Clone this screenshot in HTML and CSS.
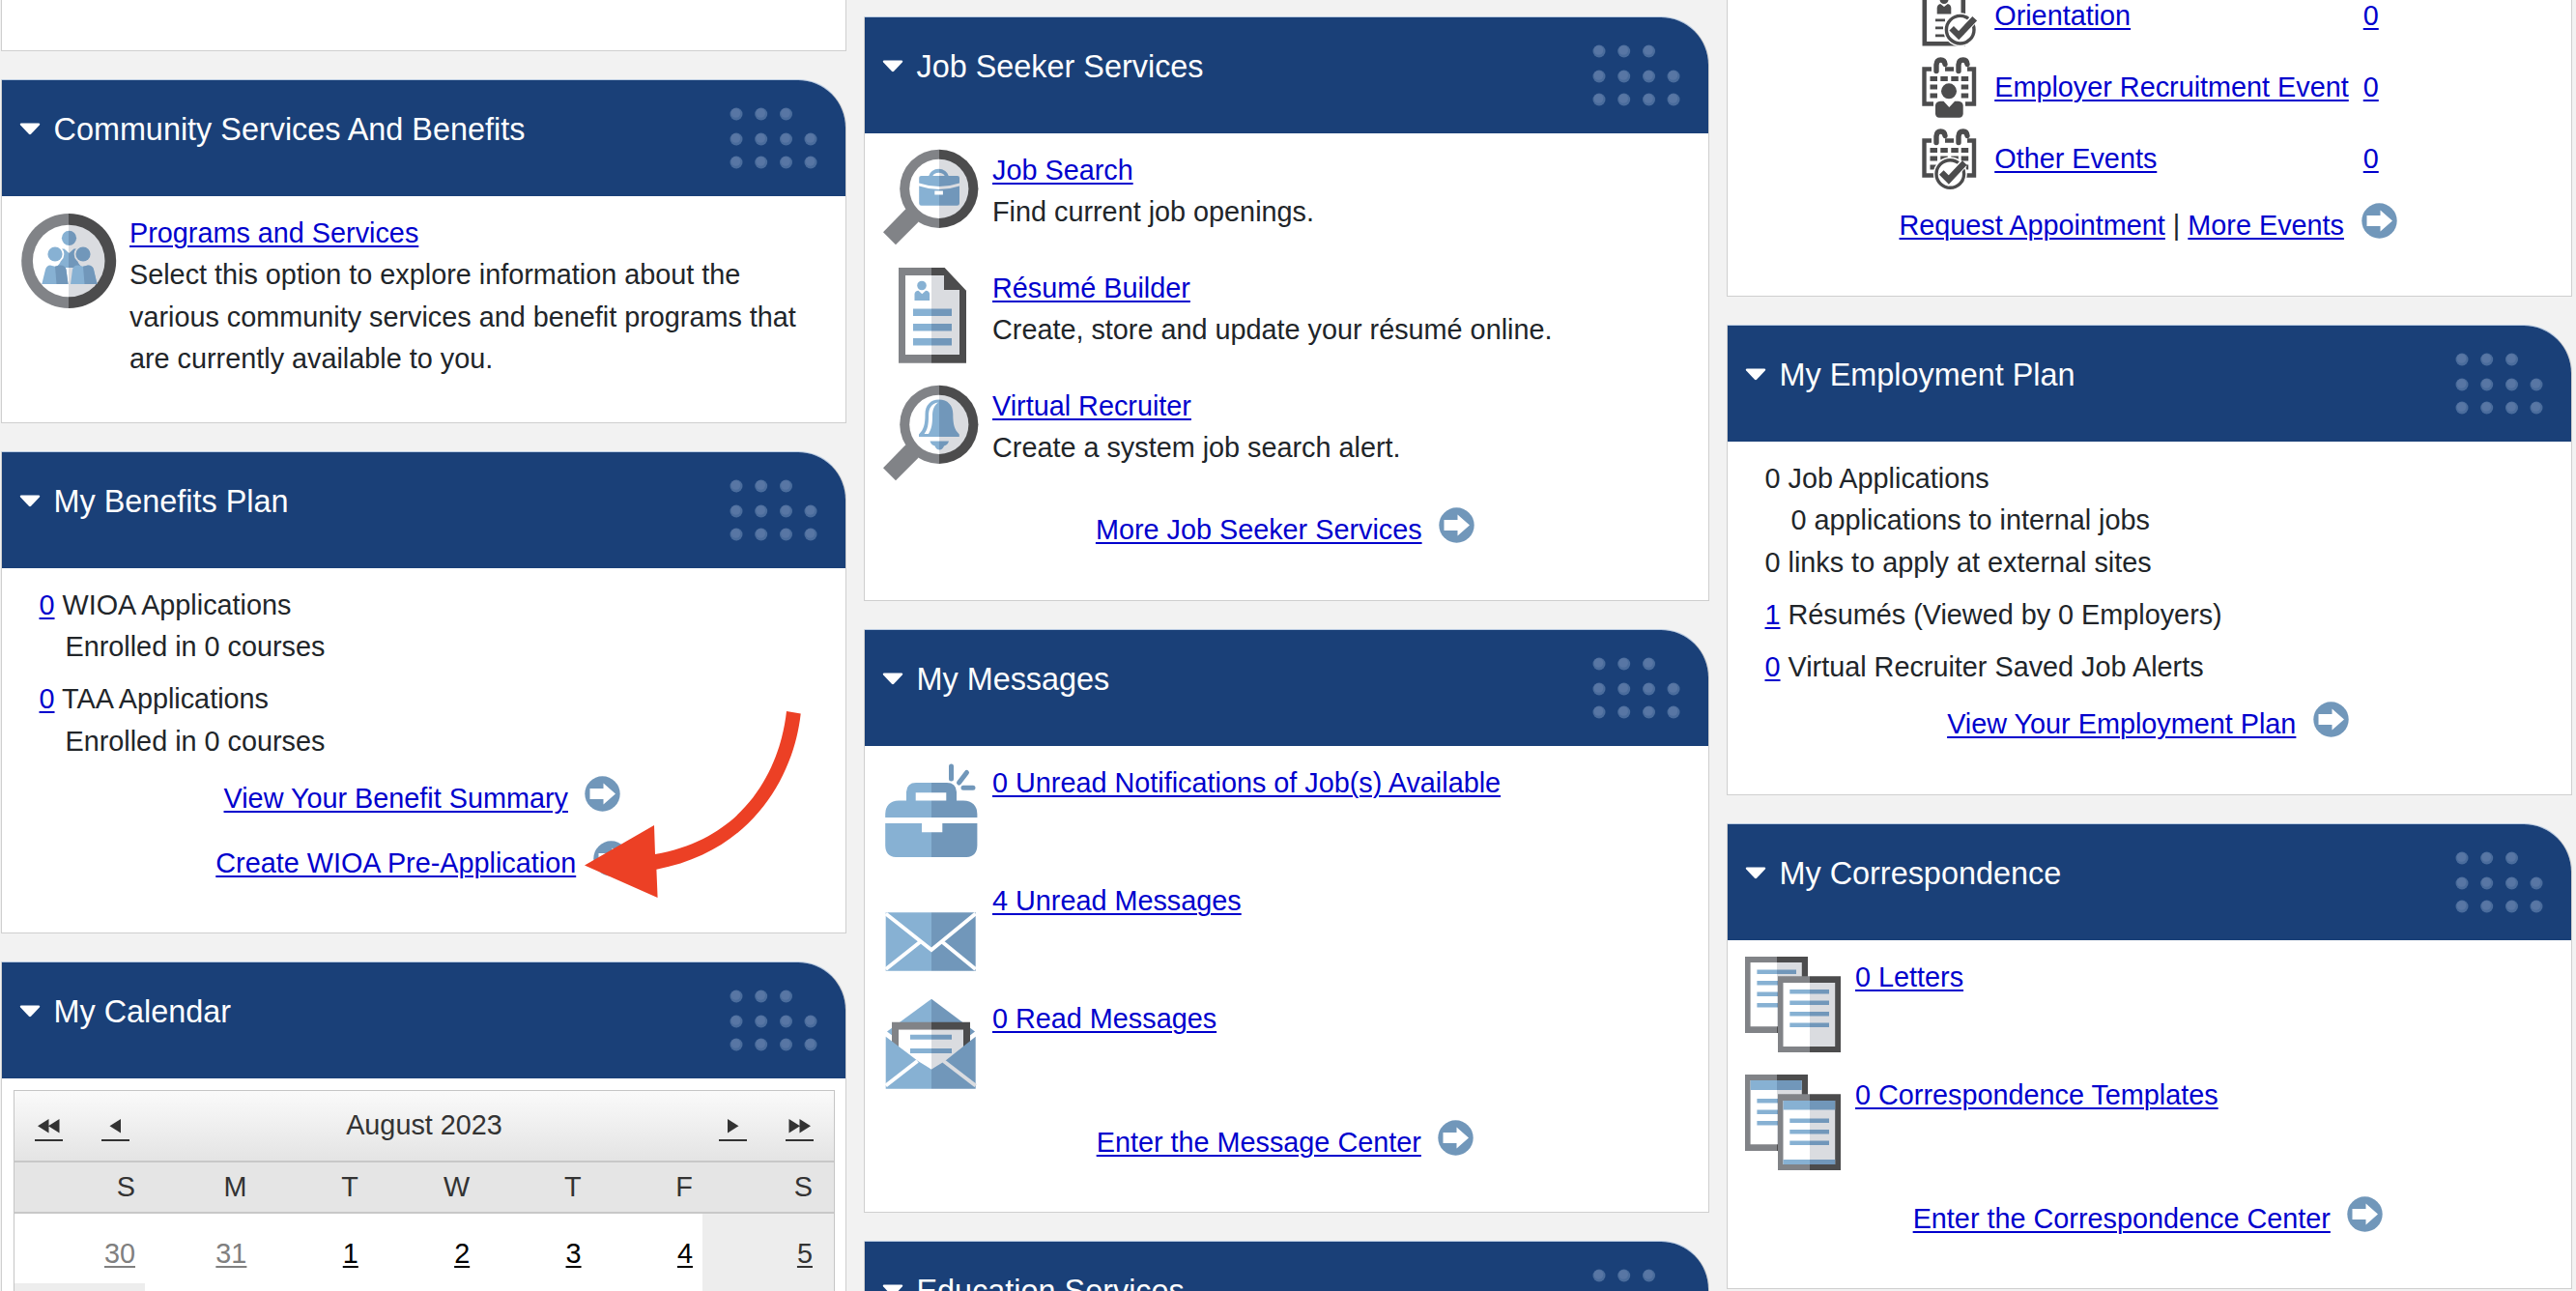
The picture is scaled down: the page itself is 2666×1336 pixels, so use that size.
FILE: index.html
```html
<!DOCTYPE html>
<html lang="en">
<head>
<meta charset="utf-8">
<title>Dashboard</title>
<link rel="stylesheet" href="styles.css">
</head>
<body>
<svg class="defs" width="0" height="0" aria-hidden="true">
  <defs>
    <linearGradient id="g50" gradientUnits="userSpaceOnUse" x1="0" x2="100" y1="0" y2="0"><stop offset=".5" stop-color="#818387"/><stop offset=".5" stop-color="#4c4c4d"/></linearGradient>
    <linearGradient id="b50" gradientUnits="userSpaceOnUse" x1="0" x2="100" y1="0" y2="0"><stop offset=".5" stop-color="#87b1d3"/><stop offset=".5" stop-color="#7197ba"/></linearGradient>
    <linearGradient id="p50" gradientUnits="userSpaceOnUse" x1="0" x2="100" y1="0" y2="0"><stop offset=".5" stop-color="#fff"/><stop offset=".5" stop-color="#dadce0"/></linearGradient>
    <linearGradient id="g58" gradientUnits="userSpaceOnUse" x1="0" x2="100" y1="0" y2="0"><stop offset=".58" stop-color="#818387"/><stop offset=".58" stop-color="#4c4c4d"/></linearGradient>
    <linearGradient id="b58" gradientUnits="userSpaceOnUse" x1="0" x2="100" y1="0" y2="0"><stop offset=".58" stop-color="#87b1d3"/><stop offset=".58" stop-color="#7197ba"/></linearGradient>
    <linearGradient id="p58" gradientUnits="userSpaceOnUse" x1="0" x2="100" y1="0" y2="0"><stop offset=".58" stop-color="#fff"/><stop offset=".58" stop-color="#dadce0"/></linearGradient>
    <linearGradient id="g32" gradientUnits="userSpaceOnUse" x1="0" x2="100" y1="0" y2="0"><stop offset=".32" stop-color="#818387"/><stop offset=".32" stop-color="#4c4c4d"/></linearGradient>
    <linearGradient id="b32" gradientUnits="userSpaceOnUse" x1="0" x2="100" y1="0" y2="0"><stop offset=".32" stop-color="#87b1d3"/><stop offset=".32" stop-color="#7197ba"/></linearGradient>
    <linearGradient id="p32" gradientUnits="userSpaceOnUse" x1="0" x2="100" y1="0" y2="0"><stop offset=".32" stop-color="#fff"/><stop offset=".32" stop-color="#dadce0"/></linearGradient>
    <linearGradient id="g66" gradientUnits="userSpaceOnUse" x1="0" x2="100" y1="0" y2="0"><stop offset=".66" stop-color="#818387"/><stop offset=".66" stop-color="#4c4c4d"/></linearGradient>
    <linearGradient id="b66" gradientUnits="userSpaceOnUse" x1="0" x2="100" y1="0" y2="0"><stop offset=".66" stop-color="#87b1d3"/><stop offset=".66" stop-color="#7197ba"/></linearGradient>
    <linearGradient id="p66" gradientUnits="userSpaceOnUse" x1="0" x2="100" y1="0" y2="0"><stop offset=".66" stop-color="#fff"/><stop offset=".66" stop-color="#dadce0"/></linearGradient>
    <symbol id="caret" viewBox="0 0 22 13"><path d="M2 .5h18q2 .3.8 2L12.300 11.600q-1.300 1.200-2.600 0L1.200 2.500Q0 .8 2 .5z" fill="#fff"/></symbol>
    <symbol id="dots" viewBox="0 0 91 64">
      <g fill="#4a6c9c"><circle cx="7" cy="7" r="6.500"/><circle cx="32.700" cy="7" r="6.500"/><circle cx="58.500" cy="7" r="6.500"/><circle cx="7" cy="33" r="6.500"/><circle cx="32.700" cy="33" r="6.500"/><circle cx="58.500" cy="33" r="6.500"/><circle cx="84" cy="33" r="6.500"/><circle cx="7" cy="57" r="6.500"/><circle cx="32.700" cy="57" r="6.500"/><circle cx="58.500" cy="57" r="6.500"/><circle cx="84" cy="57" r="6.500"/></g>
      <g fill="#5876a4"><circle cx="6.500" cy="6" r="4.800"/><circle cx="32.200" cy="6" r="4.800"/><circle cx="58" cy="6" r="4.800"/><circle cx="6.500" cy="32" r="4.800"/><circle cx="32.200" cy="32" r="4.800"/><circle cx="58" cy="32" r="4.800"/><circle cx="83.500" cy="32" r="4.800"/><circle cx="6.500" cy="56" r="4.800"/><circle cx="32.200" cy="56" r="4.800"/><circle cx="58" cy="56" r="4.800"/><circle cx="83.500" cy="56" r="4.800"/></g>
    </symbol>
    <symbol id="go" viewBox="0 0 37 37"><circle cx="18.500" cy="18.500" r="18.200" fill="#7197ba"/><path d="M5.500 13h14V7.500L32 18.500 19.500 29.500V24h-14z" fill="#fff"/></symbol>
    <symbol id="people" viewBox="0 0 100 100">
      <circle cx="50.200" cy="51" r="49" fill="url(#g50)"/><circle cx="50.200" cy="51" r="37.300" fill="url(#p50)"/>
      <g fill="url(#b50)"><circle cx="50.500" cy="27.300" r="7.600"/><path d="M42.500 38.500h3L50.500 43l5-4.500h3q3 1 2.500 4l-2.500 5.500q1 6 4.500 8.500l-5 1.500H43l-5-1.500q4-3 4.500-8.500L40 42.500q-.5-3 2.500-4z"/></g>
      <circle cx="36" cy="44" r="9.300" fill="#fff"/><circle cx="65" cy="44" r="9.300" fill="#dadce0"/>
      <g fill="url(#b50)"><circle cx="36" cy="44" r="7.600"/><circle cx="65" cy="44" r="7.600"/></g>
      <path d="M22.300 75 26 60q1.300-4.300 5-4.500l5 1.200 5-1.200q5.500-.3 6.500 4.500l2 15z" fill="#87b1d3"/><path d="M36 56.700l5-1.200q5.500-.3 6.500 4.500l2 15H37.500z" fill="#7197ba"/>
      <path d="M52 75 54 60q1-4.800 6-4.500l5 1.200 5-1.200q5 .2 6 4.500L79.500 75z" fill="#87b1d3"/><path d="M65 56.700l5-1.200q5 .2 6 4.500L79.500 75H66.500z" fill="#7197ba"/>
    </symbol>
    <symbol id="glass" viewBox="0 0 100 100"><path d="M23.400 62.300 0 86.300 13 99.300 36.500 75.700z" fill="#818387"/><circle cx="57.800" cy="41.300" r="40.600" fill="url(#g58)"/><circle cx="57.800" cy="41.300" r="30.600" fill="url(#p58)"/></symbol>
    <symbol id="search" viewBox="0 0 100 100"><use href="#glass"/>
      <g fill="url(#b58)"><path d="M47 28.500a10.700 9.500 0 0 1 21 0h-4a7 6 0 0 0-13 0z"/><path d="M39.500 28H77q2 0 2 2v5.500Q58 42.500 37.200 35.500V30q0-2 2.300-2z"/><path d="M37.200 38.500Q58 45.500 79 38.500v18q0 2.300-2.500 2.300h-37q-2.300 0-2.300-2.300z"/></g><path d="M53.300 43.500h8.600v4h-8.600z" fill="#fff"/></symbol>
    <symbol id="bell" viewBox="0 0 100 100"><use href="#glass"/>
      <path d="M57.800 15.500c9 0 14.500 6 14.500 15 0 11 1.500 16 6.500 21v2.500H37v-2.500c5-5 6.500-10 6.500-21 0-9 5.500-15 14.300-15z" fill="url(#b58)"/><path d="M57 18.500c-7 1-10 6-10 14 0 9-1 14-4.500 18.500h4.500c3-5 4-10 4-18 0-7 1.500-11 6-14.500z" fill="#fff"/><path d="M48.500 58.500H68q-1 4-5 5-1.500 4-4.700 4-3.300 0-4.800-4-4-1-5-5z" fill="url(#b58)"/></symbol>
    <symbol id="resume" viewBox="0 0 100 100"><path d="M16 1h47.600L86 24.700v75H16z" fill="url(#g50)"/><path d="M23 9h40v15h16v67H23z" fill="url(#p50)"/>
      <g fill="url(#b50)"><circle cx="40" cy="19.500" r="4.800"/><path d="M32.500 35v-7q.5-3 4-3.300l3.800 3.500 3.800-3.500q3.500.3 4 3.300v7z"/><path d="M31 43.500h40v7.500H31zM31 59h40v7.500H31zM31 74h40v7.500H31z"/></g></symbol>
    <symbol id="jobs" viewBox="0 0 100 100"><path fill-rule="evenodd" d="M24 40.500v-9q.5-9.500 10-9.500h32q9.500 0 10 9.500v9h7q14 .5 14.400 14V58H2.200v-3.500q.4-13.500 14-14zM33.700 32.300v8.200h31.600v-8.200zM2.200 64H40v9.300h21.300V64h36.100v23q-.4 11.500-11 12H13q-10.500-.5-10.800-12z" fill="url(#b50)"/><path d="M70.500 5v13M86.500 11.500 78.500 22M83 27.300h10" stroke="#7197ba" stroke-width="5" stroke-linecap="round" fill="none"/></symbol>
    <symbol id="mail" viewBox="0 0 100 100"><path d="M2.700 34.300h93v60.400h-93z" fill="url(#b50)"/><path d="M2.700 35.500 50 73l45.700-37.500M38 65 2.700 93M61.500 65l34.200 28" stroke="#fff" stroke-width="4" fill="none"/></symbol>
    <symbol id="openmail" viewBox="0 0 100 100"><path d="M50 1.700 95 35.500 50 70 4 35.500z" fill="url(#b50)"/><path d="M9 25.700h81V60H9z" fill="url(#g50)"/><path d="M16 33.700h67V58L50 76 16 58z" fill="url(#p50)"/><path d="M2.700 40.700 36 66 50 74.500 64 66l31.700-25.300v54h-93z" fill="url(#b50)"/><path d="M16 50.500V33.700h67v16.800L50 74.500z" fill="url(#p50)"/><path d="M28 38.700h43v5H28zM28 53h43v5H28z" fill="url(#b50)"/><path d="M35.500 66 2.700 91.500" stroke="#fff" stroke-width="4" fill="none"/><path d="M62.500 66l33.200 25.500" stroke="#dadce0" stroke-width="4" fill="none"/></symbol>
    <symbol id="letters" viewBox="-2 0 102 101"><path d="M-1 1h65v79H-1z" fill="url(#g32)"/><path d="M4.600 7h53.200v66.300H4.600z" fill="url(#p32)"/><path d="M11.400 14.500H52v4.500H11.400zM11.400 26H40v4.500H11.400zM11.400 37.500H40V42H11.400zM11.400 49H40v4.500H11.400z" fill="url(#b32)"/>
      <path d="M33 21.300h65V100H33z" fill="url(#g66)"/><path d="M38.500 28h53.700v66H38.500z" fill="url(#p66)"/><path d="M45.300 35H86v4.500H45.300zM45.300 46.500H86V51H45.300zM45.300 58H86v4.500H45.300zM45.300 69.500H86V74H45.300z" fill="url(#b66)"/></symbol>
    <symbol id="templates" viewBox="-2 0 102 101"><path d="M-1 1h65v79H-1z" fill="url(#g32)"/><path d="M4.600 7h53.200v66.300H4.600z" fill="url(#p32)"/><path d="M4.600 7h53.200v10H4.600zM11.400 26H40v4.500H11.400zM11.400 37.500H40V42H11.400zM11.400 49H40v4.500H11.400z" fill="url(#b32)"/>
      <path d="M33 21.300h65V100H33z" fill="url(#g66)"/><path d="M38.500 28h53.700v66H38.500z" fill="url(#p66)"/><path d="M38.500 28h53.700v9.500H38.500zM45.300 46.500H86V51H45.300zM45.300 58H86v4.500H45.300zM45.300 69.500H86V74H45.300zM38.500 89h53.700v5H38.500z" fill="url(#b66)"/></symbol>
    <symbol id="cal" viewBox="0 0 57 64"><path d="M2.500 12.500h51.500v36H2.500z" fill="none" stroke="#4c4c4d" stroke-width="4.400"/><path d="M10 8h14v10H10zM33 8h14v10H33z" fill="#fff"/><path d="M15 14.500V8q.3-5 4.500-5Q23.500 3 24 7.500M38 14.500V8q.3-5 4.500-5Q46.500 3 47 7.500" fill="none" stroke="#4c4c4d" stroke-width="5.400" stroke-linecap="round"/>
      <path d="M8.500 20H16v5H8.500zM19.300 20h7.500v5h-7.500zM30.300 20h7.500v5h-7.500zM40.700 20h7.500v5h-7.500zM8.500 28.500H16v5H8.500zM40.700 28.500h7.500v5h-7.500zM8.500 37.500H16v5H8.500zM40.700 37.500h7.500v5h-7.500z" fill="#4c4c4d"/></symbol>
    <symbol id="recruit" viewBox="0 0 57 64"><use href="#cal" width="57" height="64"/><path d="M12 44h33v8H12z" fill="#fff"/><circle cx="28" cy="35.300" r="8" fill="#4c4c4d"/><path d="M14 59V50q.5-4 5-4.300h3.500L28.300 52l5.800-6.300H38q4.200.3 4.700 4.300v9q-.5 3.700-4 3.700H18q-3.500 0-4-3.700z" fill="#4c4c4d"/></symbol>
    <symbol id="tick" viewBox="0 0 40 40"><circle cx="18" cy="20" r="17.500" fill="#fff"/><circle cx="18" cy="20" r="14.300" fill="#fff" stroke="#4c4c4d" stroke-width="3.400"/><path d="m10 19 6.500 7L32 9" fill="none" stroke="#fff" stroke-width="9"/><path d="m9 18.500 7.500 7.500L33 8.500" fill="none" stroke="#4c4c4d" stroke-width="6.500"/></symbol>
    <symbol id="other" viewBox="0 0 57 64"><use href="#cal" width="57" height="64"/><path d="M19.300 28.500h7.500v5h-7.500zM30.300 28.500h7.500v5h-7.500z" fill="#4c4c4d"/><use href="#tick" x="11.300" y="27" width="40" height="40"/></symbol>
    <symbol id="orient" viewBox="0 0 57 64"><path d="M2.800 2.800h40v57.400h-40z" fill="none" stroke="#4c4c4d" stroke-width="4.600"/><circle cx="23" cy="14.500" r="4.500" fill="#4c4c4d"/><path d="M15.700 29.500V23q.5-3.500 3.500-4l3.800 3 3.800-3q3 .5 3.500 4v6.500zM14 34.500h10v2.800H14zM14 42.500h8v2.800h-8zM14 50.500h10v2.800H14z" fill="#4c4c4d"/><use href="#tick" x="21.700" y="25.700" width="40" height="40"/></symbol>
  </defs>
</svg>
<main class="board">
  <section class="column">
    <article class="card card-cut-left"></article>
    <article class="card card-community">
      <header class="card-head"><svg class="caret"><use href="#caret"/></svg><h2>Community Services And Benefits</h2><svg class="dots"><use href="#dots"/></svg></header>
      <div class="card-body">
        <div class="service"><svg class="icon"><use href="#people"/></svg><div><a href="#">Programs and Services</a><p>Select this option to explore information about the<br>various community services and benefit programs that<br>are currently available to you.</p></div></div>
      </div>
    </article>
    <article class="card card-benefits">
      <header class="card-head"><svg class="caret"><use href="#caret"/></svg><h2>My Benefits Plan</h2><svg class="dots"><use href="#dots"/></svg></header>
      <div class="card-body">
        <ul class="facts">
          <li><a href="#">0</a> WIOA Applications<p class="indent">Enrolled in 0 courses</p></li>
          <li><a href="#">0</a> TAA Applications<p class="indent">Enrolled in 0 courses</p></li>
        </ul>
        <div class="more"><a href="#">View Your Benefit Summary</a><svg class="go"><use href="#go"/></svg></div>
        <div class="more more-second"><a href="#">Create WIOA Pre-Application</a><svg class="go"><use href="#go"/></svg></div>
      </div>
      <svg class="pointer" viewBox="0 0 230 200"><path d="M209 3C203 58 170 134 73 151L72 121 0 162.600 75.600 196 74.400 166.700C175 148 217 68 223.700 5.500z" fill="#ec4025"/></svg>
    </article>
    <article class="card card-calendar">
      <header class="card-head"><svg class="caret"><use href="#caret"/></svg><h2>My Calendar</h2><svg class="dots"><use href="#dots"/></svg></header>
      <div class="calendar">
        <div class="cal-title">
          <a class="nav" href="#"><svg viewBox="0 0 29 25"><path d="M14.500 4v14.500L3 11.300zM25.500 4v14.500L14 11.300z"/></svg></a>
          <a class="nav nav-single" href="#"><svg viewBox="0 0 29 25"><path d="M20 4v14.500L8.500 11.300z"/></svg></a>
          <span>August 2023</span>
          <a class="nav" href="#"><svg viewBox="0 0 29 25"><path d="M9 4v14.500L20.500 11.300z"/></svg></a>
          <a class="nav nav-single" href="#"><svg viewBox="0 0 29 25"><path d="M3.500 4v14.500L15 11.300zM14.500 4v14.500L26 11.300z"/></svg></a>
        </div>
        <div class="cal-row cal-days"><span>S</span><span>M</span><span>T</span><span>W</span><span>T</span><span>F</span><span>S</span></div>
        <div class="cal-row cal-week"><span class="other"><a href="#">30</a></span><span class="other"><a href="#">31</a></span><span><a href="#">1</a></span><span><a href="#">2</a></span><span><a href="#">3</a></span><span><a href="#">4</a></span><span class="weekend"><a href="#">5</a></span></div>
        <div class="cal-row cal-week"><span class="weekend"></span><span></span><span></span><span></span><span></span><span></span><span class="weekend"></span></div>
      </div>
    </article>
  </section>

  <section class="column column-mid">
    <article class="card card-seeker">
      <header class="card-head"><svg class="caret"><use href="#caret"/></svg><h2>Job Seeker Services</h2><svg class="dots"><use href="#dots"/></svg></header>
      <div class="card-body">
        <div class="service"><svg class="icon"><use href="#search"/></svg><div><a href="#">Job Search</a><p>Find current job openings.</p></div></div>
        <div class="service"><svg class="icon"><use href="#resume"/></svg><div><a href="#">Résumé Builder</a><p>Create, store and update your résumé online.</p></div></div>
        <div class="service"><svg class="icon"><use href="#bell"/></svg><div><a href="#">Virtual Recruiter</a><p>Create a system job search alert.</p></div></div>
        <div class="more"><a href="#">More Job Seeker Services</a><svg class="go"><use href="#go"/></svg></div>
      </div>
    </article>
    <article class="card card-messages">
      <header class="card-head"><svg class="caret"><use href="#caret"/></svg><h2>My Messages</h2><svg class="dots"><use href="#dots"/></svg></header>
      <div class="card-body">
        <div class="service"><svg class="icon"><use href="#jobs"/></svg><div><a href="#">0 Unread Notifications of Job(s) Available</a></div></div>
        <div class="service"><svg class="icon"><use href="#mail"/></svg><div><a href="#">4 Unread Messages</a></div></div>
        <div class="service"><svg class="icon"><use href="#openmail"/></svg><div><a href="#">0 Read Messages</a></div></div>
        <div class="more"><a href="#">Enter the Message Center</a><svg class="go"><use href="#go"/></svg></div>
      </div>
    </article>
    <article class="card">
      <header class="card-head"><svg class="caret"><use href="#caret"/></svg><h2>Education Services</h2><svg class="dots"><use href="#dots"/></svg></header>
    </article>
  </section>

  <section class="column">
    <article class="card card-events">
      <div class="events">
        <svg class="event-icon"><use href="#orient"/></svg><a href="#">Orientation</a><a href="#">0</a>
        <svg class="event-icon"><use href="#recruit"/></svg><a href="#">Employer Recruitment Event</a><a href="#">0</a>
        <svg class="event-icon"><use href="#other"/></svg><a href="#">Other Events</a><a href="#">0</a>
      </div>
      <div class="more more-events"><span><a href="#">Request Appointment</a> | <a href="#">More Events</a></span><svg class="go"><use href="#go"/></svg></div>
    </article>
    <article class="card card-plan">
      <header class="card-head"><svg class="caret"><use href="#caret"/></svg><h2>My Employment Plan</h2><svg class="dots"><use href="#dots"/></svg></header>
      <div class="card-body">
        <ul class="facts">
          <li>0 Job Applications<p class="indent">0 applications to internal jobs</p><p>0 links to apply at external sites</p></li>
          <li><a href="#">1</a> Résumés (Viewed by 0 Employers)</li>
          <li><a href="#">0</a> Virtual Recruiter Saved Job Alerts</li>
        </ul>
        <div class="more"><a href="#">View Your Employment Plan</a><svg class="go"><use href="#go"/></svg></div>
      </div>
    </article>
    <article class="card card-mail">
      <header class="card-head"><svg class="caret"><use href="#caret"/></svg><h2>My Correspondence</h2><svg class="dots"><use href="#dots"/></svg></header>
      <div class="card-body">
        <div class="service"><svg class="icon icon-wide"><use href="#letters"/></svg><div><a href="#">0 Letters</a></div></div>
        <div class="service"><svg class="icon icon-wide"><use href="#templates"/></svg><div><a href="#">0 Correspondence Templates</a></div></div>
        <div class="more"><a href="#">Enter the Correspondence Center</a><svg class="go"><use href="#go"/></svg></div>
      </div>
    </article>
  </section>
</main>
</body>
</html>
```
FILE: styles.css
```css
* { box-sizing: border-box; }
body {
  margin: 0;
  height: 1336px;
  overflow: hidden;
  background: #f2f2f2;
  color: #212529;
  font: 28.8px/43.4px Arial, "Liberation Sans", sans-serif;
}
p, h2, ul { margin: 0; padding: 0; }
a {
  color: #0000cd;
  text-decoration: underline;
  text-decoration-thickness: 2px;
  text-underline-offset: 3px;
}
.defs { position: absolute; }
.board {
  display: grid;
  grid-template-columns: repeat(3, 875px);
  column-gap: 18px;
  padding-left: 1px;
  height: 1336px;
  overflow: hidden;
}
.column { display: flex; flex-direction: column; gap: 29px; }
.column-mid { padding-top: 17px; }
.card {
  flex: none;
  position: relative;
  background: #fff;
  border: 1px solid #cfcfcf;
  border-top-color: #b9cbe2;
  border-top-right-radius: 50px;
}
.card-cut-left { height: 53px; border-top: 0; border-radius: 0; }
.card-community { height: 356px; }
.card-benefits { height: 499px; }
.card-calendar { height: 400px; }
.card-seeker { height: 605px; }
.card-messages { height: 604px; }
.card-events { height: 307px; border-top: 0; border-radius: 0; }
.card-plan { height: 487px; }
.card-mail { height: 482px; }

.card-head {
  display: flex;
  height: 120px;
  padding: 0 29px 0 18px;
  background: #1a4078;
  border-top-right-radius: 49px;
}
.card-head h2 {
  flex: 1;
  margin: 33px 0 0 13.500px;
  color: #fff;
  font-size: 32.4px;
  font-weight: 400;
  line-height: 36px;
}
.caret { width: 22px; height: 13px; margin-top: 44px; }
.dots { width: 91px; height: 64px; margin-top: 27.500px; }

.card-body { padding-top: 17px; }
.service { display: flex; min-height: 122px; padding-left: 19px; }
.icon { flex: none; width: 100px; height: 100px; margin: -1px 13px 0 0; }
.icon-wide { width: 102px; height: 101px; margin-left: -2px; }
.service a { display: inline-block; }
.more {
  display: flex;
  justify-content: center;
  height: 43.4px;
  padding-top: 0;
  margin-top: 5.500px;
  padding-right: 3px;
}
.more-second { margin-top: 23px; }
.go { width: 37px; height: 37px; margin: -2px 0 0 17.500px; }

.facts { list-style: none; padding-left: 38.500px; }
.facts li { padding-bottom: 10.600px; }
.indent { padding-left: 27px; }
/* Callout arrow drawn over the card */
.pointer {
  position: absolute;
  left: 603px;
  top: 265px;
  width: 230px;
  height: 200px;
}

.calendar { width: 850px; margin: 12px 0 0 12px; border: 1px solid #c5c5c5; color: #333; }
.cal-title {
  display: flex;
  align-items: center;
  height: 74px;
  padding: 0 21px;
  background: linear-gradient(#fafafa, #e4e4e4);
  border-bottom: 2px solid #c8c8c8;
}
.cal-title span { flex: 1; text-align: center; }
.nav { width: 29px; height: 27px; margin-top: 4px; border-bottom: 2px solid #333; fill: #333; }
.nav svg { display: block; width: 29px; height: 25px; }
.nav-single { margin-left: 40px; }
.cal-row { display: grid; grid-template-columns: 135px repeat(5, 115.4px) 136px; text-align: right; }
.cal-row span { padding-right: 10px; }
.cal-row span:last-child { padding-right: 22px; }
.cal-days { height: 53px; line-height: 51px; background: #e5e5e5; border-bottom: 2px solid #c8c8c8; }
.cal-week { height: 72px; line-height: 82px; }
.cal-week a { color: #000; }
.cal-week .other a { color: #808080; }
.cal-week .weekend { background: #ededed; }
.cal-week .weekend a { color: #333; }

.events {
  display: grid;
  grid-template-columns: 57px auto auto;
  grid-auto-rows: 74px;
  align-items: center;
  justify-content: center;
  margin-top: -20.500px;
  padding-left: 3px;
  column-gap: 15px;
}
.event-icon { width: 57px; height: 64px; margin-left: -1px; }
.events a:nth-child(3n+2) { padding-left: 2px; }
.more-events { margin-top: 10.600px; }
```
